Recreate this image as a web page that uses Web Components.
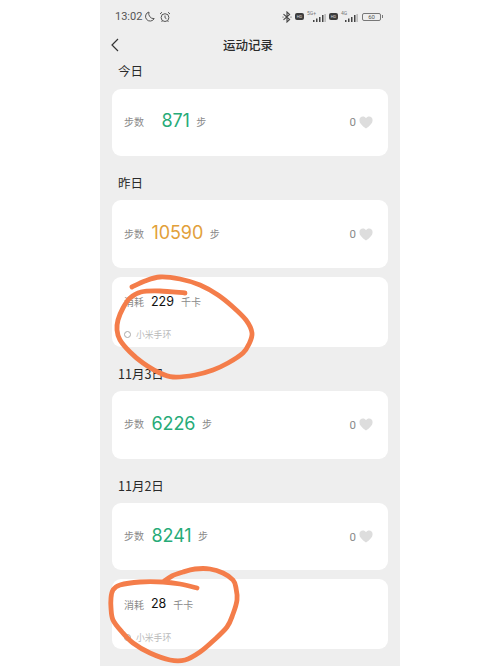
<!DOCTYPE html>
<html lang="zh">
<head>
<meta charset="utf-8">
<title>运动记录</title>
<style>
    html, body { margin: 0; padding: 0; background: #fff; }
    body { font-family: "Noto Sans CJK SC", "Noto Sans", sans-serif; }
</style>
</head>
<body>
<phone-frame>
    <status-bar></status-bar>
    <nav-bar>运动记录</nav-bar>
    <record-list>
        <day-label first>今日</day-label>
        <step-card value="871" tone="green" indent="10"></step-card>
        <day-label>昨日</day-label>
        <step-card value="10590" tone="orange"></step-card>
        <burn-card value="229"></burn-card>
        <day-label>11月3日</day-label>
        <step-card value="6226" tone="green"></step-card>
        <day-label>11月2日</day-label>
        <step-card value="8241" tone="green"></step-card>
        <burn-card value="28"></burn-card>
    </record-list>
    <scribble-layer></scribble-layer>
</phone-frame>

<script>
const CJK = '"Noto Sans CJK SC", "Noto Sans", sans-serif';

class PhoneFrame extends HTMLElement {
    constructor() {
        super();
        this.attachShadow({ mode: 'open' });
        this.shadowRoot.innerHTML = `
            <style>
                :host {
                    display: block;
                    position: relative;
                    width: 300px;
                    height: 666px;
                    margin: 0 auto;
                    background: #eeeeee;
                    overflow: hidden;
                }
            </style>
            <slot></slot>
        `;
    }
}

class StatusBar extends HTMLElement {
    constructor() {
        super();
        this.attachShadow({ mode: 'open' });
        this.shadowRoot.innerHTML = `
            <style>
                :host {
                    display: flex;
                    align-items: center;
                    justify-content: space-between;
                    height: 33px;
                    padding: 0 17px 0 15px;
                    color: #555;
                    font: 11px Roboto, sans-serif;
                }
                .side { display: flex; align-items: center; }
                .left { gap: 2px; }
                .right { gap: 3px; }
                svg { display: block; }
                .net {
                    position: relative;
                    height: 12px;
                }
                .net.g5 { width: 19px; }
                .net.g4 { width: 17px; }
                .net span {
                    position: absolute;
                    left: 0;
                    top: 0;
                    font-size: 5px;
                    line-height: 5px;
                    color: #777;
                }
                .net svg { position: absolute; right: 0; bottom: 1px; }
                .hd {
                    width: 9px;
                    height: 7px;
                    border-radius: 2px;
                    background: #3c3c3c;
                    color: #ddd;
                    font-size: 4px;
                    line-height: 7px;
                    text-align: center;
                }
                .battery {
                    display: flex;
                    align-items: center;
                    justify-content: center;
                    width: 17px;
                    height: 6px;
                    border: 1px solid #777;
                    border-radius: 2px;
                    font-size: 6px;
                    line-height: 6px;
                    color: #555;
                    margin-left: 1px;
                }
                .cap { width: 1px; height: 3px; background: #777; margin-left: -2px; }
            </style>
            <div class="side left">
                <span>13:02</span>
                <svg width="11" height="11" viewBox="0 0 11 11" fill="none" stroke="#555" stroke-width="1">
                    <path d="M5 1A4.600 4.600 0 1 0 10.200 7.600 5 5 0 0 1 5 1Z"/>
                </svg>
                <svg style="margin-left:2px" width="12" height="12" viewBox="0 0 12 12" fill="none" stroke="#555" stroke-width="1">
                    <circle cx="6" cy="6.600" r="3.900"/>
                    <path d="M6 4.500V6.800L7.400 7.600M1 3 3 1.200M11 3 9 1.200M3.200 10.200 2.400 11M8.800 10.200 9.600 11"/>
                </svg>
            </div>
            <div class="side right">
                <svg width="10" height="12" viewBox="0 0 10 12" fill="none" stroke="#444" stroke-width="1.100">
                    <path d="M1.500 3.200 7.600 8.600 5 11V1L7.600 3.400 1.500 8.800"/>
                    <circle cx="1" cy="6" r=".6" fill="#444" stroke="none"/>
                    <circle cx="9" cy="6" r=".6" fill="#444" stroke="none"/>
                </svg>
                <span class="hd">HD</span>
                <span class="net g5"><span>5G+</span>${StatusBar.bars()}</span>
                <span class="hd">HD</span>
                <span class="net g4"><span>4G</span>${StatusBar.bars()}</span>
                <span class="battery">60</span><span class="cap"></span>
            </div>
        `;
    }

    static bars() {
        return `<svg width="13" height="8" viewBox="0 0 13 8" fill="#444">
            <rect x="0" y="6" width="1.500" height="2"/>
            <rect x="3" y="4.500" width="1.500" height="3.500"/>
            <rect x="6" y="3" width="1.500" height="5"/>
            <rect x="9" y="1" width="1.500" height="7"/>
            <rect x="11.500" y="0" width="1.200" height="8" fill="#aaa"/>
        </svg>`;
    }
}

class NavBar extends HTMLElement {
    constructor() {
        super();
        this.attachShadow({ mode: 'open' });
        this.shadowRoot.innerHTML = `
            <style>
                :host {
                    display: grid;
                    grid-template-columns: 38px 1fr 42px;
                    align-items: center;
                    height: 23px;
                    color: #2b2b2b;
                    font: 500 12.500px/23px ${CJK};
                    text-align: center;
                }
                svg { display: block; margin-left: 11px; }
            </style>
            <svg width="8" height="14" viewBox="0 0 8 14" fill="none" stroke="#333" stroke-width="1.200">
                <path d="M7 1 1 7l6 6"/>
            </svg>
            <span><slot></slot></span>
            <span></span>
        `;
    }
}

class RecordList extends HTMLElement {
    constructor() {
        super();
        this.attachShadow({ mode: 'open' });
        this.shadowRoot.innerHTML = `
            <style>
                :host {
                    display: flex;
                    flex-direction: column;
                    padding: 5px 12px 0;
                }
            </style>
            <slot></slot>
        `;
    }
}

class DayLabel extends HTMLElement {
    constructor() {
        super();
        this.attachShadow({ mode: 'open' });
        this.shadowRoot.innerHTML = `
            <style>
                :host {
                    display: block;
                    padding: 17px 6px 7.250px;
                    color: #2a2a2a;
                    font: 400 12.500px/20px ${CJK};
                }
                :host([first]) { padding-top: 0; padding-bottom: 7.500px; }
            </style>
            <slot></slot>
        `;
    }
}

class StepCard extends HTMLElement {
    connectedCallback() {
        const value = this.getAttribute('value');
        const tone = this.getAttribute('tone') === 'orange' ? '#e2a03a' : '#27ab78';
        const indent = this.getAttribute('indent') || 0;
        this.attachShadow({ mode: 'open' });
        this.shadowRoot.innerHTML = `
            <style>
                :host {
                    display: flex;
                    align-items: center;
                    height: 67.500px;
                    padding: 0 15px 2px 12px;
                    box-sizing: border-box;
                    background: #fff;
                    border-radius: 9px;
                    color: #8a8a8a;
                    font: 10px ${CJK};
                }
                .num {
                    margin: 0 6.500px 0 7.500px;
                    margin-left: calc(7.500px + ${indent}px);
                    color: ${tone};
                    font: 400 18px/24px Inter, sans-serif;
                    letter-spacing: -.1px;
                }
                .likes {
                    display: flex;
                    align-items: center;
                    gap: 3px;
                    margin: 2px 0 0 auto;
                    font: 11.500px Roboto, sans-serif;
                }
                svg { display: block; }
            </style>
            <span>步数</span>
            <span class="num">${value}</span>
            <span>步</span>
            <span class="likes">0
                <svg width="14" height="13" viewBox="0 0 14 13" fill="#dddddd">
                    <path d="M7 12.600C2.800 9.400.4 7.200.4 4.200.4 2 2 .6 3.900.6 5.200.6 6.300 1.200 7 2.300 7.700 1.200 8.800.6 10.100.6 12 .6 13.600 2 13.600 4.200 13.600 7.200 11.200 9.400 7 12.600Z"/>
                </svg>
            </span>
        `;
    }
}

class BurnCard extends HTMLElement {
    connectedCallback() {
        const value = this.getAttribute('value');
        this.attachShadow({ mode: 'open' });
        this.shadowRoot.innerHTML = `
            <style>
                :host {
                    display: flex;
                    flex-direction: column;
                    gap: 16px;
                    height: 70px;
                    box-sizing: border-box;
                    margin-top: 9px;
                    padding: 15px 12px 0;
                    background: #fff;
                    border-radius: 9px;
                    color: #8a8a8a;
                    font: 10px ${CJK};
                }
                .row { display: flex; align-items: center; gap: 7px; height: 20px; }
                .num { color: #111; font: 400 12.500px/20px Inter, sans-serif; }
                .src {
                    display: flex;
                    align-items: center;
                    gap: 5px;
                    height: 14px;
                    color: #b9b9b9;
                    font-size: 8.800px;
                }
                .dot {
                    width: 5px;
                    height: 5px;
                    border: 1px solid #a9a9a9;
                    border-radius: 50%;
                }
            </style>
            <div class="row">
                <span>消耗</span>
                <span class="num">${value}</span>
                <span>千卡</span>
            </div>
            <div class="src"><span class="dot"></span><span>小米手环</span></div>
        `;
    }
}

// marker scribbles drawn over the screenshot, points are in frame coordinates
class ScribbleLayer extends HTMLElement {
    static MARKS = [
        [[32,287],[45,281],[60,277],[80,279],[100,285],[118,295],[133,307],[146,320],[152,333],[149,344],[143,353],[128,363],[113,370],[95,375],[73,377],[58,372],[43,363],[30,352],[20,340],[17,330],[18,320],[23,308],[30,298],[41,292],[60,291],[85,293]],
        [[97,588],[80,584],[63,582],[40,582],[20,585],[13,590],[11,598],[11,608],[13,620],[22,632],[33,643],[50,653],[70,660],[85,660],[100,652],[113,641],[127,627],[133,614],[137,600],[136,588],[133,580],[123,573],[110,569],[95,569],[83,572],[72,576],[63,582]]
    ];

    static toPath(pts) {
        let d = `M${pts[0][0]} ${pts[0][1]}`;
        for (let i = 0; i < pts.length - 1; i++) {
            const p0 = pts[i - 1] || pts[i];
            const p1 = pts[i];
            const p2 = pts[i + 1];
            const p3 = pts[i + 2] || p2;
            const c1x = p1[0] + (p2[0] - p0[0]) / 6;
            const c1y = p1[1] + (p2[1] - p0[1]) / 6;
            const c2x = p2[0] - (p3[0] - p1[0]) / 6;
            const c2y = p2[1] - (p3[1] - p1[1]) / 6;
            d += `C${c1x.toFixed(1)} ${c1y.toFixed(1)} ${c2x.toFixed(1)} ${c2y.toFixed(1)} ${p2[0]} ${p2[1]}`;
        }
        return d;
    }

    connectedCallback() {
        const paths = ScribbleLayer.MARKS.map(m => `<path d="${ScribbleLayer.toPath(m)}"/>`).join('');
        this.attachShadow({ mode: 'open' });
        this.shadowRoot.innerHTML = `
            <style>
                :host { position: absolute; inset: 0; pointer-events: none; }
                svg { display: block; }
            </style>
            <svg width="300" height="666" viewBox="0 0 300 666" fill="none" stroke="#f47d4a"
                 stroke-width="4.800" stroke-linecap="round" stroke-linejoin="round">${paths}</svg>
        `;
    }
}

customElements.define('phone-frame', PhoneFrame);
customElements.define('status-bar', StatusBar);
customElements.define('nav-bar', NavBar);
customElements.define('record-list', RecordList);
customElements.define('day-label', DayLabel);
customElements.define('step-card', StepCard);
customElements.define('burn-card', BurnCard);
customElements.define('scribble-layer', ScribbleLayer);
</script>
</body>
</html>
